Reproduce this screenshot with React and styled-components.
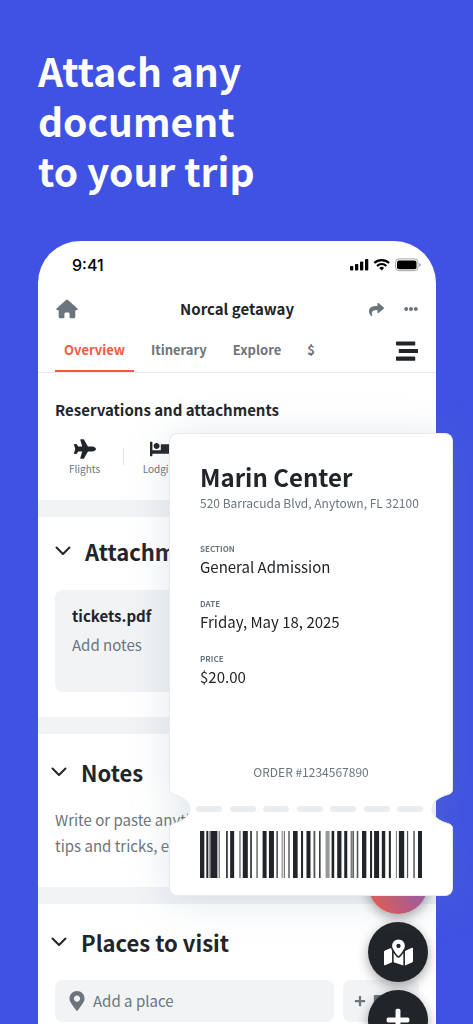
import React from "react";
import styled, { createGlobalStyle } from "styled-components";
import { FaShare, FaEllipsisH, FaPlane, FaBed, FaMapMarkedAlt, FaPlus, FaMapMarkerAlt, FaStickyNote, FaStream } from "react-icons/fa";

const ink = "#212529";
const muted = "#6c757d";
const panel = "#f1f3f5";
const brand = "#3f52e3";
const hairline = "#e7eaee";

const Global = createGlobalStyle`
  *, *::before, *::after { box-sizing: border-box; }
  body {
    margin: 0;
    background: ${brand};
    color: ${ink};
    font-family: "Noto Sans CJK JP", "Noto Sans", sans-serif;
  }
  h1, h2, h3, p, dl, dt, dd { margin: 0; }
  button { font: inherit; color: inherit; border: 0; padding: 0; background: none; cursor: pointer; }
  a { color: inherit; text-decoration: none; }
`;

const Page = styled.div`
  display: flex;
  flex-direction: column;
  min-height: 100vh;
  padding: 45px 37px 0 38px;
  overflow: clip;
`;

const Headline = styled.h1`
  color: #fff;
  font-size: 39px;
  line-height: 50px;
  font-weight: 700;
  margin-bottom: 46px;
`;

const Phone = styled.div`
  position: relative;
  flex: 1;
  background: #fff;
  border-radius: 42px 42px 0 0;
`;

const StatusBar = styled.div`
  display: flex;
  align-items: center;
  justify-content: space-between;
  height: 48px;
  padding: 0 14px 0 34px;
  color: #000;
  font-family: Inter, "Liberation Sans", sans-serif;
  font-size: 16px;
  font-weight: 500;
`;

const Header = styled.header`
  display: grid;
  grid-template-columns: 1fr auto 1fr;
  align-items: center;
  height: 40px;
  padding: 0 18px;
  color: ${muted};
`;

const TripTitle = styled.h2`
  color: ${ink};
  font-size: 15px;
  line-height: 24px;
`;

const HeaderActions = styled.div`
  display: flex;
  align-items: center;
  justify-content: flex-end;
  gap: 20px;
`;

const IconButton = styled.button`
  display: flex;
  justify-self: start;
  color: ${(p) => p.$color || muted};
`;

const Nav = styled.nav`
  display: flex;
  align-items: stretch;
  gap: 8px;
  height: 44px;
  padding: 0 18px 0 17px;
  border-bottom: 1px solid ${hairline};
`;

const Tab = styled.a`
  padding: 0 9px;
  font-size: 13px;
  line-height: 42px;
  font-weight: 700;
  color: ${(p) => (p.$active ? "#f75940" : muted)};
  border-bottom: 2px solid ${(p) => (p.$active ? "#f75940" : "transparent")};
`;

const MenuSlot = styled.div`
  display: flex;
  align-items: center;
  margin-left: auto;
`;

const Section = styled.section`
  padding: ${(p) => p.$pad};
  & + & { border-top: 17px solid ${panel}; }
`;

const SmallHeading = styled.h3`
  font-size: 15px;
  line-height: 24px;
  margin-bottom: 16px;
`;

const Kinds = styled.div`
  display: flex;
  margin-left: -9px;
`;

const Kind = styled.button`
  display: flex;
  flex-direction: column;
  align-items: center;
  position: relative;
  width: 77px;
  font-size: 10px;
  line-height: 14px;
  color: ${muted};
  svg { color: ${ink}; height: 22px; margin-bottom: 2px; }
  & + &::before {
    content: "";
    position: absolute;
    left: 0;
    top: 10px;
    height: 17px;
    border-left: 1px solid #dee2e6;
  }
`;

const SectionTitle = styled.button`
  display: flex;
  align-items: center;
  gap: 14px;
  font-size: 22px;
  line-height: 32px;
  font-weight: 700;
  margin-left: ${(p) => (p.$inset ? "0" : "-4px")};
`;

const Attachment = styled.div`
  height: 102px;
  margin-top: 23px;
  padding: 14px 17px;
  border-radius: 8px;
  background: ${panel};
`;

const FileName = styled.a`
  display: block;
  font-size: 15px;
  line-height: 24px;
  font-weight: 700;
  margin-bottom: 4px;
`;

const Hint = styled.p`
  color: ${muted};
  font-size: 15px;
  line-height: 26px;
`;

const NotesHint = styled(Hint)`
  margin-top: 19px;
`;

const AddRow = styled.div`
  display: flex;
  gap: 9px;
  margin-top: 22px;
`;

const AddPlace = styled.label`
  display: flex;
  flex: 1;
  min-width: 0;
  align-items: center;
  gap: 6px;
  height: 42px;
  padding: 0 12px;
  border-radius: 8px;
  background: ${panel};
  color: ${muted};
  input {
    flex: 1;
    min-width: 0;
    border: 0;
    padding: 0;
    background: none;
    font: inherit;
    font-size: 15px;
    line-height: 24px;
    color: ${ink};
    outline: 0;
  }
  input::placeholder { color: ${muted}; opacity: 1; }
`;

const AddOther = styled.button`
  display: flex;
  align-items: center;
  gap: 7px;
  width: 76px;
  height: 42px;
  padding: 0 11px;
  border-radius: 8px;
  background: ${panel};
  color: ${muted};
`;

const Fabs = styled.div`
  position: absolute;
  right: 8px;
  bottom: -26px;
  display: flex;
  flex-direction: column;
  gap: 8px;
`;

const Fab = styled.button`
  display: flex;
  align-items: center;
  justify-content: center;
  width: 60px;
  height: 60px;
  border-radius: 50%;
  color: #fff;
  background: ${(p) => p.$fill || ink};
  box-shadow: 0 4px 12px rgba(0, 0, 0, 0.35);
`;

const Ticket = styled.article`
  position: absolute;
  top: 192px;
  left: 131px;
  right: -17px;
  filter: drop-shadow(0 4px 20px rgba(120, 140, 160, 0.22));
`;

const TicketTop = styled.div`
  height: 356px;
  padding: 25px 30px 0;
  background: #fff;
  border: solid ${hairline};
  border-width: 1px 1px 0;
  border-radius: 8px 8px 0 0;
  display: flex;
  flex-direction: column;
`;

const Venue = styled.h2`
  font-size: 24px;
  line-height: 36px;
`;

const Address = styled.p`
  color: ${muted};
  font-size: 12px;
  line-height: 16px;
  margin-bottom: 32px;
  white-space: nowrap;
`;

const Facts = styled.dl`
  display: flex;
  flex-direction: column;
  gap: 19px;
  dt { font-size: 8px; line-height: 12px; font-weight: 700; color: ${muted}; }
  dd { font-size: 15px; line-height: 24px; }
`;

const Order = styled.p`
  margin-top: auto;
  padding-bottom: 8px;
  text-align: center;
  color: ${muted};
  font-size: 12px;
  line-height: 18px;
`;

const Tear = styled.div`
  display: flex;
  height: 40px;
`;

const Dashes = styled.div`
  flex: 1;
  display: flex;
  align-items: center;
  justify-content: space-between;
  padding: 0 8px 0 5px;
  background: #fff;
  span { width: 26px; height: 6px; border-radius: 3px; background: #e9edf0; }
`;

const TicketBottom = styled.div`
  height: 67px;
  padding: 2px 30px 18px;
  background: #fff;
  border: solid ${hairline};
  border-width: 0 1px 1px;
  border-radius: 0 0 8px 8px;
  svg { display: block; width: 100%; height: 47px; }
`;

const Notch = ({ flip }) => (
  <svg width="22" height="40" viewBox="0 0 22 40" aria-hidden="true">
    <g transform={flip ? "translate(22 0) scale(-1 1)" : undefined}>
      <path d="M0 0C0 3 2 4.500 5 5.500C14 8 21 13 21 20C21 27 14 32 5 34.500C2 35.500 0 37 0 40H22V0Z" fill="#fff" />
      <path d="M.5 0C.5 3 2 4.500 5 5.500C14 8 21 13 21 20C21 27 14 32 5 34.500C2 35.500 .5 37 .5 40" fill="none" stroke={hairline} />
    </g>
  </svg>
);

/* [left edge, width, shade] on a 221-unit wide code */
const bars = [
  [0, 4.3], [6.3, 2], [9, 1, "#999"], [10.3, 7], [18.6, 1, "#555"], [26, 1.6], [30, 4], [39, 1.6, "#888"], [42.6, 5],
  [50, 1.6], [56, 1.6, "#777"], [62.3, 4], [68.6, 5], [76, 1.6, "#555"], [81, 2, "#aaa"], [83.6, 1, "#777"],
  [88, 1.2, "#333"], [92.6, 4.6], [100.6, 2], [106, 4], [113, 1.8, "#555"], [118.6, 1.4], [125, 4, "#999"],
  [131, 2.6], [136.6, 4.2], [143.6, 3], [150, 1, "#444"], [151.6, 1.8, "#666"], [156, 1.6, "#555"], [161.3, 4.3],
  [169.3, 2], [173.3, 5], [181, 3.4], [188, 2], [195, 1, "#777"], [198, 5.3], [206, 1.2, "#555"],
  [212.3, 1.6, "#666"], [217, 4],
];

const Barcode = () => (
  <svg viewBox="0 0 221 47" preserveAspectRatio="none" role="img" aria-label="Barcode">
    {bars.map(([x, w, shade]) => (
      <rect key={x} x={x} width={w} height="47" fill={shade || ink} />
    ))}
  </svg>
);

const HomeIcon = () => (
  <svg width="22" height="20" viewBox="0 0 22 20" fill={muted} aria-hidden="true">
    <path d="M10.100 .900a1.300 1.300 0 0 1 1.800 0l9.300 8.300c.9.800.4 2-.7 2h-1.200v6.600c0 .9-.6 1.500-1.500 1.500h-3.400a.8.800 0 0 1-.8-.8v-3.300c0-1-.7-1.700-1.600-1.700h-2c-.9 0-1.600.7-1.600 1.700v3.300a.8.800 0 0 1-.8.800H4.200c-.9 0-1.500-.6-1.500-1.500v-6.600H1.500c-1.100 0-1.600-1.200-.7-2Z" />
  </svg>
);

const Chevron = () => (
  <svg width="16" height="10" viewBox="0 0 16 10" fill="none" stroke={ink} strokeWidth="2" strokeLinecap="round" strokeLinejoin="round" aria-hidden="true">
    <path d="M1.500 1.500 8 8l6.500-6.500" />
  </svg>
);

const StatusIcons = () => (
  <svg width="72" height="14" viewBox="0 0 72 14" aria-hidden="true">
    <g>
      <rect x="0" y="8" width="3.300" height="4.500" rx="1" />
      <rect x="5" y="6" width="3.300" height="6.500" rx="1" />
      <rect x="10" y="3.500" width="3.300" height="9" rx="1" />
      <rect x="15" y="1" width="3.300" height="11.500" rx="1" />
    </g>
    <g fill="none" stroke="#000" strokeWidth="2.100">
      <path d="M24.300 5.100a10.600 10.600 0 0 1 14.800 0" />
      <path d="M27 7.900a6.700 6.700 0 0 1 9.400 0" />
    </g>
    <path d="M31.700 12.500 29.300 10a3.500 3.500 0 0 1 4.800 0Z" />
    <rect x="45.500" y=".9" width="22.500" height="11.800" rx="3.500" fill="none" stroke="#000" strokeOpacity=".35" />
    <rect x="47" y="2.400" width="19.500" height="8.800" rx="2" />
    <path d="M69.300 4.900v3.800q1.500-.5 1.500-1.900t-1.500-1.900Z" fillOpacity=".4" />
  </svg>
);

export default function App() {
  return (
    <Page>
      <Global />
      <Headline>Attach any<br />document<br />to your trip</Headline>
      <Phone>
        <StatusBar><span>9:41</span><StatusIcons /></StatusBar>
        <Header>
          <IconButton aria-label="Home"><HomeIcon /></IconButton>
          <TripTitle>Norcal getaway</TripTitle>
          <HeaderActions>
            <IconButton aria-label="Share"><FaShare size={15} /></IconButton>
            <IconButton aria-label="More"><FaEllipsisH size={14} /></IconButton>
          </HeaderActions>
        </Header>
        <Nav>
          <Tab href="#overview" $active>Overview</Tab>
          <Tab href="#itinerary">Itinerary</Tab>
          <Tab href="#explore">Explore</Tab>
          <Tab href="#budget">$</Tab>
          <MenuSlot><IconButton aria-label="Menu" $color={ink}><FaStream size={22} /></IconButton></MenuSlot>
        </Nav>
        <Section $pad="25px 17px 24px">
          <SmallHeading>Reservations and attachments</SmallHeading>
          <Kinds>
            <Kind><FaPlane size={22} />Flights</Kind>
            <Kind><FaBed size={24} />Lodging</Kind>
          </Kinds>
        </Section>
        <Section $pad="18px 17px 25px">
          <SectionTitle $inset><Chevron />Attachments</SectionTitle>
          <Attachment>
            <FileName href="#tickets">tickets.pdf</FileName>
            <Hint>Add notes</Hint>
          </Attachment>
        </Section>
        <Section $pad="22px 17px 28px">
          <SectionTitle><Chevron />Notes</SectionTitle>
          <NotesHint>Write or paste anything here: how to<br />tips and tricks, etc.</NotesHint>
        </Section>
        <Section $pad="22px 17px 1px">
          <SectionTitle><Chevron />Places to visit</SectionTitle>
          <AddRow>
            <AddPlace>
              <FaMapMarkerAlt size={20} />
              <input placeholder="Add a place" aria-label="Add a place" />
            </AddPlace>
            <AddOther aria-label="Add a note"><FaPlus size={12} /><FaStickyNote size={14} /></AddOther>
          </AddRow>
        </Section>
        <Fabs>
          <Fab aria-label="Assistant" $fill="linear-gradient(60deg, #f75940, #7a55c8)" />
          <Fab aria-label="Map"><FaMapMarkedAlt size={29} /></Fab>
          <Fab aria-label="Add"><FaPlus size={26} /></Fab>
        </Fabs>
        <Ticket>
          <TicketTop>
            <Venue>Marin Center</Venue>
            <Address>520 Barracuda Blvd, Anytown, FL 32100</Address>
            <Facts>
              <div><dt>SECTION</dt><dd>General Admission</dd></div>
              <div><dt>DATE</dt><dd>Friday, May 18, 2025</dd></div>
              <div><dt>PRICE</dt><dd>$20.00</dd></div>
            </Facts>
            <Order>ORDER #1234567890</Order>
          </TicketTop>
          <Tear>
            <Notch />
            <Dashes>{[0, 1, 2, 3, 4, 5, 6].map((n) => <span key={n} />)}</Dashes>
            <Notch flip />
          </Tear>
          <TicketBottom><Barcode /></TicketBottom>
        </Ticket>
      </Phone>
    </Page>
  );
}
